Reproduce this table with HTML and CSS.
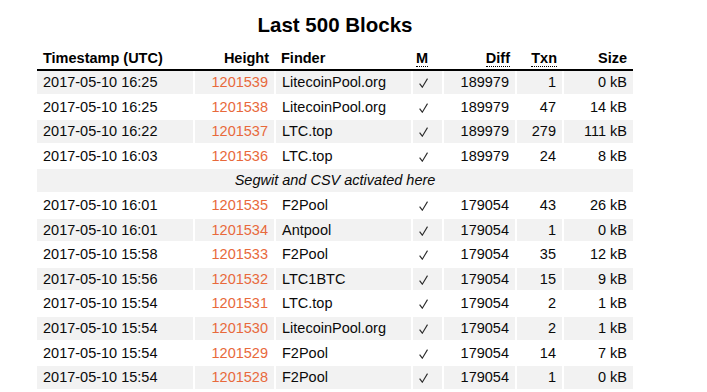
FILE: index.html
```html
<!DOCTYPE html>
<html lang="en">
<head>
    <meta charset="UTF-8">
    <title>Last 500 Blocks</title>
    <link rel="stylesheet" href="styles.css">
</head>
<body>
    <div class="page">
        <h2>Last 500 Blocks</h2>
        <table class="blocks">
            <colgroup>
                <col class="c-time">
                <col class="c-height">
                <col class="c-finder">
                <col class="c-m">
                <col class="c-diff">
                <col class="c-txn">
                <col class="c-size">
            </colgroup>
            <thead>
                <tr>
                    <th>Timestamp (UTC)</th>
                    <th class="num">Height</th>
                    <th>Finder</th>
                    <th class="m"><abbr title="Mined with SegWit">M</abbr></th>
                    <th class="num"><abbr title="Difficulty">Diff</abbr></th>
                    <th class="num"><abbr title="Transactions">Txn</abbr></th>
                    <th class="num">Size</th>
                </tr>
            </thead>
            <tbody>
                <tr><td>2017-05-10 16:25</td><td class="num"><a href="#">1201539</a></td><td>LitecoinPool.org</td><td class="m"><svg class="tick" viewBox="0 0 9 10"><path d="M0.6 5.6 L3.3 9.2 L8.5 0.6"/></svg></td><td class="num">189979</td><td class="num">1</td><td class="num">0 kB</td></tr>
                <tr><td>2017-05-10 16:25</td><td class="num"><a href="#">1201538</a></td><td>LitecoinPool.org</td><td class="m"><svg class="tick" viewBox="0 0 9 10"><path d="M0.6 5.6 L3.3 9.2 L8.5 0.6"/></svg></td><td class="num">189979</td><td class="num">47</td><td class="num">14 kB</td></tr>
                <tr><td>2017-05-10 16:22</td><td class="num"><a href="#">1201537</a></td><td>LTC.top</td><td class="m"><svg class="tick" viewBox="0 0 9 10"><path d="M0.6 5.6 L3.3 9.2 L8.5 0.6"/></svg></td><td class="num">189979</td><td class="num">279</td><td class="num">111 kB</td></tr>
                <tr><td>2017-05-10 16:03</td><td class="num"><a href="#">1201536</a></td><td>LTC.top</td><td class="m"><svg class="tick" viewBox="0 0 9 10"><path d="M0.6 5.6 L3.3 9.2 L8.5 0.6"/></svg></td><td class="num">189979</td><td class="num">24</td><td class="num">8 kB</td></tr>
                <tr class="note"><td colspan="7">Segwit and CSV activated here</td></tr>
                <tr><td>2017-05-10 16:01</td><td class="num"><a href="#">1201535</a></td><td>F2Pool</td><td class="m"><svg class="tick" viewBox="0 0 9 10"><path d="M0.6 5.6 L3.3 9.2 L8.5 0.6"/></svg></td><td class="num">179054</td><td class="num">43</td><td class="num">26 kB</td></tr>
                <tr><td>2017-05-10 16:01</td><td class="num"><a href="#">1201534</a></td><td>Antpool</td><td class="m"><svg class="tick" viewBox="0 0 9 10"><path d="M0.6 5.6 L3.3 9.2 L8.5 0.6"/></svg></td><td class="num">179054</td><td class="num">1</td><td class="num">0 kB</td></tr>
                <tr><td>2017-05-10 15:58</td><td class="num"><a href="#">1201533</a></td><td>F2Pool</td><td class="m"><svg class="tick" viewBox="0 0 9 10"><path d="M0.6 5.6 L3.3 9.2 L8.5 0.6"/></svg></td><td class="num">179054</td><td class="num">35</td><td class="num">12 kB</td></tr>
                <tr><td>2017-05-10 15:56</td><td class="num"><a href="#">1201532</a></td><td>LTC1BTC</td><td class="m"><svg class="tick" viewBox="0 0 9 10"><path d="M0.6 5.6 L3.3 9.2 L8.5 0.6"/></svg></td><td class="num">179054</td><td class="num">15</td><td class="num">9 kB</td></tr>
                <tr><td>2017-05-10 15:54</td><td class="num"><a href="#">1201531</a></td><td>LTC.top</td><td class="m"><svg class="tick" viewBox="0 0 9 10"><path d="M0.6 5.6 L3.3 9.2 L8.5 0.6"/></svg></td><td class="num">179054</td><td class="num">2</td><td class="num">1 kB</td></tr>
                <tr><td>2017-05-10 15:54</td><td class="num"><a href="#">1201530</a></td><td>LitecoinPool.org</td><td class="m"><svg class="tick" viewBox="0 0 9 10"><path d="M0.6 5.6 L3.3 9.2 L8.5 0.6"/></svg></td><td class="num">179054</td><td class="num">2</td><td class="num">1 kB</td></tr>
                <tr><td>2017-05-10 15:54</td><td class="num"><a href="#">1201529</a></td><td>F2Pool</td><td class="m"><svg class="tick" viewBox="0 0 9 10"><path d="M0.6 5.6 L3.3 9.2 L8.5 0.6"/></svg></td><td class="num">179054</td><td class="num">14</td><td class="num">7 kB</td></tr>
                <tr><td>2017-05-10 15:54</td><td class="num"><a href="#">1201528</a></td><td>F2Pool</td><td class="m"><svg class="tick" viewBox="0 0 9 10"><path d="M0.6 5.6 L3.3 9.2 L8.5 0.6"/></svg></td><td class="num">179054</td><td class="num">1</td><td class="num">0 kB</td></tr>
            </tbody>
        </table>
    </div>
</body>
</html>
```

FILE: styles.css
```css
/* Reset */
* {
    margin: 0;
    padding: 0;
    box-sizing: border-box;
}

body {
    font-family: 'Liberation Sans', Arial, sans-serif;
    font-size: 14.5px;
    color: #0a0a0a;
    background-color: #ffffff;
}

.page {
    width: 596px;
    margin-left: 37px;
}

h2 {
    text-align: center;
    font-size: 20.5px;
    font-weight: bold;
    color: #000000;
    padding-top: 13px;
    height: 47px;
}

/* Tabla */
.blocks {
    width: 596px;
    table-layout: fixed;
    border-collapse: collapse;
}

.c-time { width: 157px; }
.c-height { width: 81px; }
.c-finder { width: 137px; }
.c-m { width: 31px; }
.c-diff { width: 73px; }
.c-txn { width: 47px; }
.c-size { width: 70px; }

th {
    text-align: left;
    font-weight: bold;
    color: #000000;
    padding: 3px 6px 2px;
    line-height: 17px;
    border-bottom: 2px solid #000000;
    white-space: nowrap;
}

td {
    padding: 3px 6px;
    line-height: 16.6px;
    border: 2px solid #ffffff;
    white-space: nowrap;
}

td:first-child {
    border-left: none;
}

td:last-child {
    border-right: none;
}

tbody tr:nth-child(odd) {
    background-color: #f2f2f2;
}

.num {
    text-align: right;
}

.m {
    padding-left: 6px;
    padding-right: 0;
}

th.m {
    padding-left: 4px;
}

.tick {
    display: inline-block;
    width: 9px;
    height: 10px;
    vertical-align: -1px;
}

.tick path {
    fill: none;
    stroke: #2a2a2a;
    stroke-width: 1.1;
}

abbr {
    text-decoration: none;
    border-bottom: 1px dotted #000000;
}

a {
    color: #e8693b;
    text-decoration: none;
}

.note td {
    text-align: center;
    font-style: italic;
}
```
